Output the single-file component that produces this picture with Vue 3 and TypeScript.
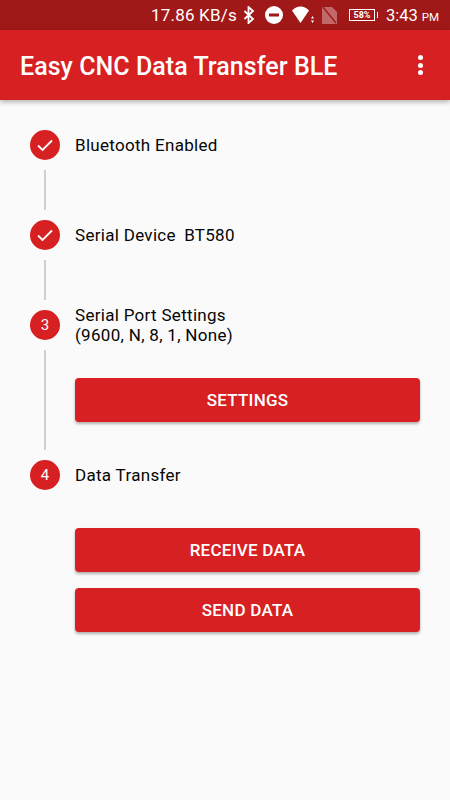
<script setup lang="ts">
interface Action { label: string }
interface Step {
  id: number
  done: boolean
  lines: string[]
  actions: Action[]
  variant: string
}
const steps: Step[] = [
  { id: 1, done: true, lines: ['Bluetooth Enabled'], actions: [], variant: 'short' },
  { id: 2, done: true, lines: ['Serial Device \u2009BT580'], actions: [], variant: 'short' },
  { id: 3, done: false, lines: ['Serial Port Settings', '(9600, N, 8, 1, None)'], actions: [{ label: 'SETTINGS' }], variant: 'tall' },
  { id: 4, done: false, lines: ['Data Transfer'], actions: [{ label: 'RECEIVE DATA' }, { label: 'SEND DATA' }], variant: 'last' },
]
</script>

<template>
  <div class="screen">
    <div class="statusbar">
      <span class="speed">17.86 KB/s</span>
      <svg class="ic bt" width="14" height="18" viewBox="0 0 14 18">
        <path d="M2.500 5l8.500 8-4.500 4V1L11 5l-8.500 8" fill="none" stroke="#fff" stroke-width="1.800" />
      </svg>
      <svg class="ic dnd" width="18" height="18" viewBox="0 0 18 18">
        <circle cx="9" cy="9" r="9" fill="#fff" />
        <rect x="4" y="7.500" width="10" height="3" fill="#a01818" />
      </svg>
      <svg class="ic wifi" width="23" height="18" viewBox="0 0 23 18">
        <path d="M1 4.500C3.500 1.800 6.500.500 9.500.500s6 1.300 8.500 4L9.500 17z" fill="#fff" />
        <path d="M21.500 10l1.500 2.500h-3zM21.500 17l1.500-2.500h-3z" fill="#fff" />
      </svg>
      <svg class="ic sim" width="15" height="17" viewBox="0 0 15 17">
        <path d="M0 0h10l5 5v12H0z" fill="#fff" opacity=".35" />
        <path d="M1 0l13 16" stroke="#a01818" stroke-width="1.300" />
      </svg>
      <div class="battery"><span>58%</span></div>
      <span class="clock">3:43<small>PM</small></span>
    </div>

    <header class="appbar">
      <h1>Easy CNC Data Transfer BLE</h1>
      <div class="more"><i></i><i></i><i></i></div>
    </header>

    <main class="steps">
      <section v-for="step in steps" :key="step.id" class="step" :class="step.variant">
        <div class="rail">
          <div class="badge">
            <svg v-if="step.done" width="18" height="18" viewBox="0 0 18 18">
              <path d="M2 9.500l4.500 4.500L16 4.500" fill="none" stroke="#fff" stroke-width="1.800" />
            </svg>
            <span v-else>{{ step.id }}</span>
          </div>
          <div v-if="step.variant !== 'last'" class="line"></div>
        </div>
        <div class="body">
          <div class="label">
            <div>
              <div v-for="text in step.lines" :key="text">{{ text }}</div>
            </div>
          </div>
          <div v-if="step.actions.length" class="actions">
            <button v-for="action in step.actions" :key="action.label" type="button">{{ action.label }}</button>
          </div>
        </div>
      </section>
    </main>
  </div>
</template>

<style>
html, body { margin: 0; background: #fafafa; }
</style>

<style scoped>
.screen {
  width: 450px;
  height: 800px;
  overflow: hidden;
  background: #fafafa;
  font-family: Roboto, "Liberation Sans", sans-serif;
  color: #050505;
}
.statusbar {
  height: 30px;
  box-sizing: border-box;
  background: #a01818;
  color: #fff;
  display: flex;
  align-items: center;
  padding: 0 0 0 151px;
  font-size: 16.500px;
  white-space: nowrap;
}
.speed { width: 85px; flex: none; font-size: 17px; letter-spacing: .2px; }
.ic { flex: none; }
.bt { margin-left: 6px; }
.dnd { margin-left: 9px; }
.wifi { margin-left: 8px; }
.sim { margin-left: 8px; }
.battery {
  margin-left: 12px;
  flex: none;
  width: 24px;
  height: 10px;
  border: 1px solid #fff;
  display: flex;
  align-items: center;
  justify-content: center;
  font-size: 9px;
  font-weight: 700;
  position: relative;
}
.battery::after {
  content: "";
  position: absolute;
  right: -4px;
  top: 2px;
  width: 1px;
  height: 6px;
  background: #fff;
}
.clock { margin-left: 11px; }
.clock small { font-size: 11.500px; margin-left: 4px; }
.appbar {
  height: 70px;
  box-sizing: border-box;
  background: #d72022;
  color: #fff;
  display: flex;
  align-items: center;
  justify-content: space-between;
  padding: 0 27px 0 20px;
  box-shadow: 0 2px 5px rgba(0, 0, 0, .3);
  position: relative;
}
.appbar h1 {
  margin: 2px 0 0;
  font-size: 25px;
  font-weight: 500;
  letter-spacing: .05px;
}
.more { display: flex; flex-direction: column; gap: 2.300px; }
.more i { width: 5px; height: 5px; border-radius: 50%; background: #fff; display: block; }
.steps {
  padding: 30px 30px 0;
  display: flex;
  flex-direction: column;
}
.step { display: flex; gap: 15px; }
.step.short { height: 90px; }
.step.tall { height: 150px; }
.rail {
  width: 30px;
  flex: none;
  display: flex;
  flex-direction: column;
  align-items: center;
}
.badge {
  width: 30px;
  height: 30px;
  flex: none;
  border-radius: 50%;
  background: #d72022;
  color: #fff;
  font-size: 15px;
  display: flex;
  align-items: center;
  justify-content: center;
}
.line {
  width: 2px;
  flex: 1;
  margin: 10px 0;
  background: #cfcfcf;
}
.body { flex: 1; min-width: 0; }
.label {
  height: 30px;
  display: flex;
  align-items: center;
  font-size: 17px;
  line-height: 20px;
  letter-spacing: .3px;
}
.actions {
  display: flex;
  flex-direction: column;
  gap: 16px;
  margin-top: 38px;
}
button {
  height: 44px;
  border: 0;
  border-radius: 4px;
  background: #d72022;
  color: #fff;
  font: 500 17px Roboto, "Liberation Sans", sans-serif;
  letter-spacing: .25px;
  box-shadow: 0 2px 3px rgba(0, 0, 0, .3);
  padding: 0;
}
</style>
